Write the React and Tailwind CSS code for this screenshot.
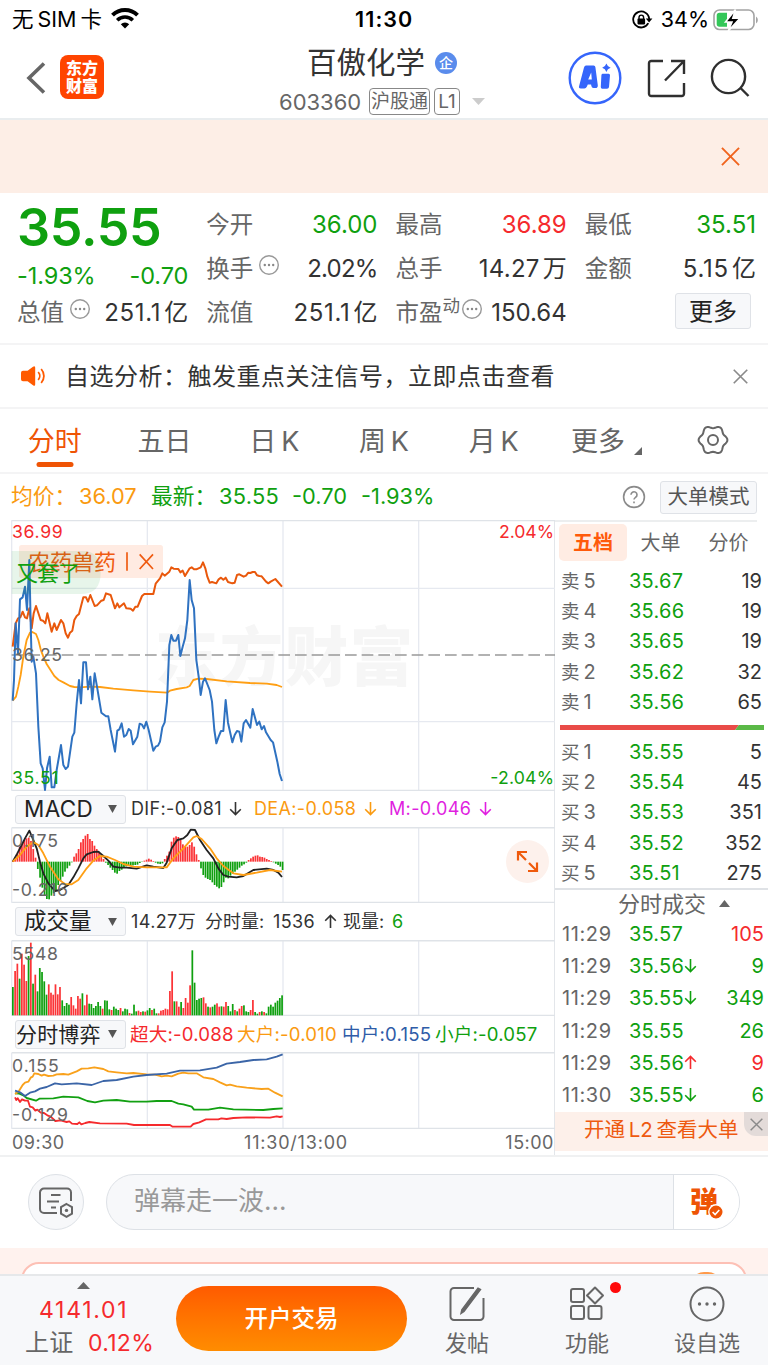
import React from 'react';
import clsx from 'clsx';

const GREEN = '#0fa00f';
const RED = '#f52a2d';

/* ---------- chart data (three units per pixel) ---------- */

const PRICE =
  '38,662 42,600 47,430 54,520 60,358 68,352 75,320 81,390 88,240 92,430 95,545 100,530 108,580 115,740 122,850 128,865 135,930 141,865 149,830 155,922 163,922 170,870 183,795 190,855 197,867 204,860 217,770 223,758 230,670 237,600 243,670 250,547 258,547 264,628 271,590 277,658 284,580 291,620 304,698 318,709 325,709 332,750 345,815 352,752 358,748 365,730 372,770 379,765 386,747 392,752 399,793 412,770 419,731 426,734 432,745 439,725 446,750 460,812 467,800 474,797 480,785 487,742 494,727 501,665 508,495 514,465 520,482 528,482 535,465 541,528 548,500 555,475 562,420 569,300 575,360 582,385 589,540 596,590 602,645 609,605 615,595 629,630 636,665 643,750 649,790 656,770 663,753 670,753 677,660 684,728 697,787 704,765 711,753 718,755 724,785 731,730 738,720 751,743 758,687 771,735 778,725 785,748 792,738 798,757 812,780 819,787 832,845 839,882 846,903';
const SECTOR =
  '38,500 47,430 54,415 61,412 68,395 75,412 81,415 88,385 95,445 101,400 108,378 122,420 129,422 136,430 142,400 155,455 163,430 170,450 183,420 190,430 197,460 204,473 210,458 217,452 223,420 230,408 237,402 250,352 258,352 264,365 271,345 284,378 291,376 304,362 311,360 318,340 332,345 345,385 352,370 358,382 372,370 379,385 392,386 399,392 406,380 413,380 426,348 433,342 453,342 460,342 467,311 480,295 487,280 494,287 508,275 514,262 521,266 535,267 541,277 548,272 555,288 569,265 575,262 582,268 589,268 602,262 609,247 616,265 622,290 629,308 636,306 649,310 656,298 663,293 670,299 677,293 684,306 697,310 704,308 711,285 718,283 731,290 738,287 745,278 751,279 758,276 765,276 771,286 778,288 785,289 798,305 805,310 812,305 826,297 846,320';
const AVERAGE =
  '38,662 48,650 55,620 62,585 70,530 80,480 90,458 97,456 108,462 115,480 122,508 130,530 140,552 150,568 163,588 176,600 190,607 210,618 223,621 240,622 270,620 300,621 340,626 400,631 450,635 501,638 510,632 530,627 560,622 569,618 580,600 595,596 620,597 680,604 750,609 800,611 830,615 846,621';

const MACD = [
  2, 12, 25, 45, 55, 65, 70, 72, 62, 38, 12, -22, -48, -78, -102, -112, -113, -102, -95, -85, -70, -58, -45, -30, -20,
  -12, -2, 15, 25, 38, 58, 68, 78, 83, 68, 62, 48, 38, 30, 18, 8, -3, -10, -18, -25, -33, -36, -28, -24, -18, -14, -12,
  -12, -11, -10, -9, -4, -1, 3, 6, 9, 6, 2, -3, -6, -7, -5, 8, 18, 30, 60, 72, 76, 74, 65, 52, 46, 45, 50, 58, 45, 22,
  5, -20, -40, -48, -52, -55, -62, -70, -75, -80, -76, -62, -48, -50, -42, -36, -30, -24, -18, -12, -8, -3, 5, 10, 15,
  18, 19, 15, 14, 12, 8, 5, 2, -2, -6, -10, -15, -25,
];
const DIF =
  '38,215 52,190 65,165 75,145 88,122 98,145 110,175 120,215 130,250 145,280 165,303 180,300 205,285 220,262 235,235 250,205 260,193 280,186 295,185 310,198 325,212 340,230 360,233 380,233 410,236 440,226 460,230 490,234 500,218 515,175 532,150 550,145 562,135 572,119 585,120 600,150 620,180 640,205 655,235 670,255 685,260 710,262 730,258 760,240 800,236 820,240 835,248 846,261';
const DEA =
  '38,215 60,195 80,170 100,156 115,165 130,190 150,230 175,268 195,282 215,283 235,270 260,235 280,212 300,198 320,200 345,210 370,222 400,230 440,232 500,232 520,205 550,175 580,142 590,138 605,147 630,175 650,205 670,228 700,250 730,255 770,248 810,240 846,245';

// positive = rising minute, negative = falling minute
const VOLUME = [
  -85, 133, 155, -110, 185, 152, 103, -178, 218, -95, 122, -72, -142, -130, -102, -62, 93, 68, 62, 93, 63, 85, -45, -28,
  -37, -32, 55, 30, 20, 58, 50, -66, 30, 62, -35, -34, -22, -28, -40, -28, 20, -45, -44, -18, 16, -26, -20, -16, 22, -12,
  -20, -18, 7, -5, -32, -12, 14, 10, -12, 11, -15, -22, 16, -20, -6, 6, 14, 16, 20, 18, 73, 132, -42, 42, 26, -40, 22,
  52, 38, 90, -195, -98, -46, -50, -52, 54, 36, -26, 24, -26, -32, 36, 26, -27, 26, 40, -28, -12, -34, 16, -12, 20, 28,
  -30, -12, -10, 16, 46, -10, -5, 10, -12, 10, -6, -26, -32, -26, -38, -44, -52, -60,
];

const FLOWS = [
  ['#f52a2d', '45,262 49,270 53,265 60,276 66,268 75,272 84,272 90,290 98,292 106,302 112,299 122,308 132,309 142,316 152,320 166,333 182,331 200,336 208,334 216,341 232,342 238,337 244,343 256,339 268,336 300,340 380,341 402,345 510,345 518,350 572,350 580,342 598,337 618,328 655,328 664,325 680,327 700,324 740,322 810,323 830,319 840,321 848,319'],
  ['#12a012', '45,250 58,251 70,256 80,264 108,272 118,266 160,265 190,260 235,262 262,273 285,277 310,272 350,270 390,275 440,275 470,273 515,273 535,281 550,283 575,290 582,299 625,299 660,293 700,298 790,300 820,297 848,295'],
  ['#f9a11b', '45,252 55,246 68,225 75,218 85,215 92,203 98,200 103,190 115,192 125,197 132,194 145,198 160,197 170,193 190,192 205,194 230,184 245,176 265,175 283,172 310,177 325,184 350,187 380,190 400,189 440,193 465,194 485,199 500,197 515,199 535,191 550,188 565,190 590,190 610,202 640,207 660,217 680,226 690,224 710,229 740,233 785,237 805,236 825,248 848,259'],
  ['#3b65a7', '45,242 60,247 75,258 90,248 105,244 120,236 140,231 165,220 185,223 230,220 275,225 310,213 350,210 400,200 440,195 500,191 540,182 600,181 650,173 680,161 720,156 760,150 800,148 830,140 848,133'],
];

const SELLS = [
  ['卖5', '35.67', '19'],
  ['卖4', '35.66', '19'],
  ['卖3', '35.65', '19'],
  ['卖2', '35.62', '32'],
  ['卖1', '35.56', '65'],
];
const BUYS = [
  ['买1', '35.55', '5'],
  ['买2', '35.54', '45'],
  ['买3', '35.53', '351'],
  ['买4', '35.52', '352'],
  ['买5', '35.51', '275'],
];
const TRADES = [
  ['11:29', '35.57', '', '105', true],
  ['11:29', '35.56', '↓', '9', false],
  ['11:29', '35.55', '↓', '349', false],
  ['11:29', '35.55', '', '26', false],
  ['11:29', '35.56', '↑', '9', true],
  ['11:30', '35.55', '↓', '6', false],
];

// six-toothed outline of the settings wheel
const GEAR = Array.from({ length: 72 }, (_, i) => {
  const a = (i * Math.PI) / 36;
  const r = 13.1 + 1.3 * Math.cos(6 * a);
  return `${(16 + r * Math.cos(a)).toFixed(2)},${(15 + r * Math.sin(a)).toFixed(2)}`;
}).join(' ');

/* ---------- small pieces ---------- */

const Cross = ({ size, color, width }) => (
  <svg width={size} height={size} viewBox="0 0 20 20" fill="none" stroke={color} strokeWidth={width}>
    <path d="M1 1 19 19M19 1 1 19" />
  </svg>
);

const Dots = () => (
  <svg width="22" height="22" viewBox="0 0 22 22" className="shrink-0">
    <circle cx="11" cy="11" r="9.3" fill="none" stroke="#999" strokeWidth="1.4" />
    <circle cx="6.8" cy="11" r="1.2" fill="#888" />
    <circle cx="11" cy="11" r="1.2" fill="#888" />
    <circle cx="15.2" cy="11" r="1.2" fill="#888" />
  </svg>
);

const Arrow = ({ up, className }) => (
  <svg
    width="13"
    height="15"
    viewBox="0 0 13 15"
    fill="none"
    stroke="currentColor"
    strokeWidth="1.6"
    className={clsx('-mt-px shrink-0', up && 'rotate-180', className)}
  >
    <path d="M6.5 1v12.5M1.2 8.3l5.3 5.3 5.3-5.3" />
  </svg>
);

const Cell = ({ label, value, unit, color = 'text-[#333]', spacing, info, sup }) => (
  <div className="flex h-11 items-center justify-between">
    <span className="flex items-center text-[23.5px] text-[#666]">
      {label}
      {sup && <span className="-mt-[14px] text-[17.5px]">{sup}</span>}
      {info && <span className={clsx('-mt-[8px]', sup ? 'ml-[1px]' : 'ml-[5px]')}><Dots /></span>}
    </span>
    <span className={clsx('text-[24px]', color)}>
      <span className={spacing}>{value}</span>
      {unit && <span className="ml-[3px]">{unit}</span>}
    </span>
  </div>
);

const Grid = ({ top, bottom, rows = [] }) => (
  <g fill="none" stroke="#e6e9f0" strokeWidth="4">
    <path d={`M442 ${top}V${bottom}M849 ${top}V${bottom}M1256 ${top}V${bottom}`} />
    {rows.map((y) => (
      <path key={y} d={`M35 ${y}H1665`} />
    ))}
    <path d={`M35 ${top}H1665M35 ${bottom}H1665`} stroke="#dfe3e8" strokeWidth="5" />
    <path d={`M35 ${top}V${bottom}`} />
  </g>
);

const Label = ({ x, y, fill = '#666', anchor = 'start', length, children }) => (
  <text x={x} y={y} fill={fill} textAnchor={anchor} textLength={length} fontSize="53">
    {children}
  </text>
);

const Picker = ({ children, tight }) => (
  <div
    className={clsx(
      'ml-[15px] flex h-[29px] w-[111px] shrink-0 items-center justify-between rounded-[3px] border border-[#dfe2e7] bg-[#f7f8fa] pr-[8px] text-[#222]',
      tight ? 'pl-0 text-[21px]' : 'pl-[8px] text-[22.5px]',
    )}
  >
    <span className="whitespace-nowrap">{children}</span>
    <svg width="9" height="8" viewBox="0 0 10 9" fill="#555">
      <path d="M0 0h10L5 9z" />
    </svg>
  </div>
);

/* ---------- sections ---------- */

const StatusBar = () => (
  <div className="flex h-10 items-center text-black">
    <div className="flex w-[355px] items-center pl-[12px]">
      <span className="text-[21.5px]">无</span>
      <span className="ml-[4px] text-[21.5px]">SIM</span>
      <span className="ml-[4px] text-[21.5px]">卡</span>
      <svg width="28" height="21" viewBox="0 0 28 21" fill="none" stroke="#000" className="ml-[9px] -mt-[3px]">
        <path d="M1.5 7.2a17.8 17.8 0 0 1 25 0" strokeWidth="4" />
        <path d="M6.2 12.2a11.2 11.2 0 0 1 15.6 0" strokeWidth="3.6" />
        <path d="M14 20.5 9.8 16.2a6 6 0 0 1 8.4 0z" fill="#000" stroke="none" />
      </svg>
    </div>
    <span className="text-[21.5px] font-semibold tracking-[1.1px]">11:30</span>
    <div className="ml-auto flex items-center pr-[9px]">
      <svg width="22" height="20" viewBox="0 0 22 20" fill="none" stroke="#000" strokeWidth="1.8">
        <path d="M17.3 13.2A8 8 0 1 1 18.2 9" />
        <path d="M14.8 8.6h6.6l-3.3 4z" fill="#000" stroke="none" />
        <rect x="6.5" y="8.6" width="7.6" height="5.8" rx="0.8" fill="#000" stroke="none" />
        <path d="M8 9V7.4a2.3 2.3 0 0 1 4.6 0V9" strokeWidth="1.4" />
      </svg>
      <span className="ml-[8px] text-[21.5px]">34%</span>
      <svg width="46" height="24" viewBox="0 0 46 24" className="ml-[4px]">
        <rect x="1" y="2" width="40" height="19.5" rx="5.5" fill="none" stroke="#a3a3a3" strokeWidth="1.6" />
        <path d="M43 8.5a4.2 4.2 0 0 1 0 7z" fill="#a3a3a3" />
        <path d="M6.5 4.7H14V18.8H6.5a2.8 2.8 0 0 1-2.8-2.8V7.5a2.8 2.8 0 0 1 2.8-2.8z" fill="#34c759" />
        <path d="M22.5 1.5 12.5 14H19l-3.8 9L27 10.2h-7.2z" fill="#000" stroke="#fff" strokeWidth="1.6" />
      </svg>
    </div>
  </div>
);

const Header = () => (
  <header className="flex h-[80px] border-b-2 border-[#e9edef]">
    <div className="flex w-[279px] shrink-0 items-start pl-[26px]">
      <svg width="20" height="32" viewBox="0 0 20 32" fill="none" stroke="#666" strokeWidth="3.6" className="mt-[22px]">
        <path d="M18 1.5 3 16l15 14.5" />
      </svg>
      <div className="ml-[14px] mt-[15px] flex h-[44px] w-[44px] flex-col items-center justify-center rounded-[8px] bg-[#ff4400] text-[16px] font-black leading-[18px] text-white">
        <span>东方</span>
        <span>财富</span>
      </div>
    </div>
    <div className="flex flex-col">
      <div className="mt-[1px] flex h-[44px] items-center pl-[28px]">
        <span className="text-[29.5px] text-[#333]">百傲化学</span>
        <span className="ml-[10px] flex h-[22px] w-[22px] items-center justify-center rounded-full bg-[#5a8cec] text-[14px] font-medium text-white">
          企
        </span>
      </div>
      <div className="flex h-[33px] items-center text-[#666]">
        <span className="w-[83px] text-[22px]">603360</span>
        <span className="ml-[7px] flex h-[27px] w-[61px] items-center justify-center rounded-[4px] border border-[#888] text-[19px]">
          沪股通
        </span>
        <span className="ml-[4px] flex h-[27px] w-[26px] items-center justify-center rounded-[4px] border border-[#888] text-[19px]">
          L1
        </span>
        <svg width="13" height="7" viewBox="0 0 13 7" fill="#ccc" className="ml-[12px]">
          <path d="M0 0h13L6.5 7z" />
        </svg>
      </div>
    </div>
    <div className="ml-auto flex h-[76px] items-center pr-[18px]">
      <svg width="54" height="54" viewBox="0 0 54 54">
        <circle cx="27" cy="27" r="25.3" fill="none" stroke="#3565fb" strokeWidth="2.4" />
        <g fill="#3565fb">
          <path
            fillRule="evenodd"
            d="M18 14.6h7.6q1.6 0 1.8 1.6l2.4 18q.2 2.8-2.4 2.8h-1.8q-2 0-2.3-2.2l-.2-1.2h-3.3l-1 2.2q-.8 1.6-2.4 1.6h-3.6q-2.6 0-1.6-2.6L16 16.6q.6-2 2-2zM20.2 28.6h3.6l-.6-7z"
          />
          <path d="M34.4 22.8h6.2q1.5 0 1.4 1.5l-1 11.6q-.2 1.8-2 1.8h-4.6q-1.8 0-1.6-1.8l.6-11.6q.1-1.5 1-1.5z" />
          <path d="M38.4 12.6q1 3.2 4.2 4.2-3.2 1-4.2 4.2-1-3.2-4.2-4.2 3.2-1 4.2-4.2z" />
        </g>
      </svg>
      <svg width="39" height="39" viewBox="0 0 39 39" fill="none" stroke="#2f2f2f" strokeWidth="2.4" className="ml-[25px]">
        <path d="M16 2H4.2A2.2 2.2 0 0 0 2 4.2v30.6A2.2 2.2 0 0 0 4.2 37h30.6a2.2 2.2 0 0 0 2.2-2.2V24" />
        <path d="M24 2h13v13M37 2 18 21.5" />
      </svg>
      <svg width="40" height="40" viewBox="0 0 40 40" fill="none" stroke="#2f2f2f" strokeWidth="2.4" className="ml-[24px]">
        <circle cx="18.5" cy="18.5" r="16.6" />
        <path d="m30.5 30 8 8" />
      </svg>
    </div>
  </header>
);

const Quote = () => (
  <section className="grid h-[152px] grid-cols-4 gap-x-[18px] border-b-2 border-[#f4f4f5] pl-[17px] pr-[12px] pt-[10px]">
    <div>
      <div className="-mt-px flex h-[52px] items-center text-[52px] font-semibold leading-none tracking-[-0.3px] text-[#0fa00f]">
        35.55
      </div>
      <div className="flex h-[37px] items-center justify-between pt-[6px] text-[23.5px] tracking-[-0.1px] text-[#0fa00f]">
        <span>-1.93%</span>
        <span>-0.70</span>
      </div>
      <Cell label="总值" value="251.1" unit="亿" spacing="tracking-[0.7px]" info />
    </div>
    <div>
      <Cell label="今开" value="36.00" color="text-[#0fa00f]" />
      <Cell label="换手" value="2.02%" spacing="tracking-[-0.8px]" info />
      <Cell label="流值" value="251.1" unit="亿" spacing="tracking-[0.7px]" />
    </div>
    <div>
      <Cell label="最高" value="36.89" color="text-[#f52a2d]" />
      <Cell label="总手" value="14.27" unit="万" spacing="tracking-[0.3px]" />
      <Cell label="市盈" sup="动" value="150.64" info />
    </div>
    <div>
      <Cell label="最低" value="35.51" color="text-[#0fa00f]" />
      <Cell label="金额" value="5.15" unit="亿" spacing="tracking-[0.8px]" />
      <button className="ml-auto mr-[5px] mt-[2px] flex h-[36px] w-[76px] items-center justify-center rounded-[3px] border border-[#dfe2e7] bg-[#f7f8fa] pt-[2px] text-[24px] text-[#222]">
        更多
      </button>
    </div>
  </section>
);

const Notice = () => (
  <section className="flex h-[64px] items-center border-b-2 border-[#f4f4f5] pl-[21px] pr-[20px]">
    <svg width="25" height="20" viewBox="0 0 25 20" fill="#ff5a00">
      <path d="M2 4.7h4.6L12 .8q2.2-1.4 2.2 1v16.4q0 2.4-2.2 1l-5.4-3.9H2q-2 0-2-2V6.7q0-2 2-2z" />
      <g fill="none" stroke="#ff5a00" strokeWidth="1.8">
        <path d="M17.2 6a6 6 0 0 1 0 8M20.2 3a10.4 10.4 0 0 1 0 14" />
      </g>
    </svg>
    <span className="ml-[19px] mt-px whitespace-nowrap text-[24px] tracking-[0.5px] text-[#333]">
      自选分析：触发重点关注信号，立即点击查看
    </span>
    <span className="ml-auto"><Cross size={15} color="#8a8a8a" width={2.2} /></span>
  </section>
);

const Tabs = () => (
  <nav className="grid h-[65px] grid-cols-7 items-center border-b-2 border-[#f4f4f5] pt-[2px] text-center text-[27px] text-[#666]">
    <div className="relative text-[#ef5405]">
      分时
      <span className="absolute bottom-[-12px] left-1/2 h-[5px] w-[37px] -translate-x-1/2 rounded-full bg-[#ef5405]" />
    </div>
    <span>五日</span>
    <span>日&thinsp;K</span>
    <span>周&thinsp;K</span>
    <span>月&thinsp;K</span>
    <span className="flex items-end justify-center pl-[6px]">
      更多
      <svg width="8" height="8" viewBox="0 0 8 8" fill="#666" className="mb-0 ml-[9px]">
        <path d="M8 0v8H0z" />
      </svg>
    </span>
    <svg width="32" height="30" viewBox="0 0 32 30" fill="none" stroke="#666" strokeWidth="2" className="mx-auto -mt-[3px]">
      <polygon points={GEAR} strokeLinejoin="round" />
      <circle cx="16" cy="15" r="5" />
    </svg>
  </nav>
);

const Summary = () => (
  <div className="flex h-[46px] items-center whitespace-nowrap pl-[11px] pr-[11px] text-[21.8px] text-[#0fa00f]">
    <span className="w-[68px] text-[#fa9a10]">均价：</span>
    <span className="w-[72px] text-[#fa9a10]">36.07</span>
    <span className="w-[68px]">最新：</span>
    <span className="w-[73px] tracking-[0.3px]">35.55</span>
    <span className="w-[69px]">-0.70</span>
    <span>-1.93%</span>
    <svg width="24" height="24" viewBox="0 0 24 24" fill="none" stroke="#8a8a8a" strokeWidth="1.6" className="ml-auto">
      <circle cx="12" cy="12" r="10.4" />
      <path d="M9 9.8a3 3 0 1 1 4.6 2.5c-1 .7-1.6 1.1-1.6 2.3M12 16.4v1.8" />
    </svg>
    <button className="ml-[14px] flex h-[33px] w-[97px] items-center justify-center rounded-[3px] border border-[#dfe2e7] bg-[#f7f8fa] text-[20.5px] text-[#555]">
      大单模式
    </button>
  </div>
);

const PriceChart = () => (
  <div className="h-[271px]">
    <svg width="544" height="271" viewBox="33 120 1632 813" className="ml-[11px]">
      <text x="464" y="600" fontSize="190" fontWeight="900" fill="#f6f6f6" textLength="775">
        东方财富
      </text>
      <Grid top={121} bottom={932} rows={[325, 725]} />
      <path d="M35 525H1665" stroke="#999" strokeWidth="4" strokeDasharray="35 15" />
      <rect x="57" y="195" width="432" height="99" rx="8" fill="#ffebe2" />
      <g fill="none" strokeWidth="5.500" strokeLinejoin="round">
        <polyline points={AVERAGE} stroke="#ff9f14" />
        <polyline points={SECTOR} stroke="#e9580c" strokeWidth="6" />
        <polyline points={PRICE} stroke="#2f72c1" strokeWidth="6" />
      </g>
      <text x="84" y="270" fontSize="66" fill="#ef5a10" textLength="264">
        农药兽药
      </text>
      <path d="M381 217V272M419 223 459 267M459 223 419 267" stroke="#ef5a10" strokeWidth="5" />
      <path d="M35 213H248Q302 213 302 278T240 342H35Z" fill="#21a53c" fillOpacity="0.11" />
      <text x="48" y="302" fontSize="66" fill={GREEN} textLength="192">
        又套了
      </text>
      <Label x="36" y="175" fill={RED} length={152}>36.99</Label>
      <Label x="36" y="543" length={150}>36.25</Label>
      <Label x="36" y="911" fill={GREEN} length={140}>35.51</Label>
      <Label x="1497" y="175" fill={RED} length={165}>2.04%</Label>
      <Label x="1471" y="911" fill={GREEN} length={191}>-2.04%</Label>
    </svg>
  </div>
);

const MacdChart = () => (
  <div className="relative h-[76px]">
    <svg width="544" height="76" viewBox="33 111 1632 228" className="ml-[11px]">
      <Grid top={113} bottom={338} />
      {MACD.map((v, i) => (
        <rect
          key={i}
          x={36 + i * 6.8}
          y={v > 0 ? 215 - v : 215}
          width="5.2"
          height={Math.abs(v)}
          fill={v > 0 ? '#fb3437' : GREEN}
        />
      ))}
      <g fill="none" strokeWidth="5.500" strokeLinejoin="round">
        <polyline points={DIF} stroke="#222" />
        <polyline points={DEA} stroke="#ff9f14" />
      </g>
      <Label x="36" y="171" length={138}>0.175</Label>
      <Label x="36" y="317" length={168}>-0.216</Label>
    </svg>
    <div className="absolute left-[506px] top-[13px] flex h-[43px] w-[43px] items-center justify-center rounded-full bg-[#fdf1ec]">
      <svg width="23" height="23" viewBox="0 0 23 23" fill="none" stroke="#ef5a0c" strokeWidth="2.2">
        <path d="M2 10.5V2h9M2 2l8 8M21 12.5V21h-9M21 21l-8-8" />
      </svg>
    </div>
  </div>
);

const VolumeChart = () => (
  <svg width="544" height="76" viewBox="33 449 1632 228" className="ml-[11px] block">
    <Grid top={451} bottom={676} />
    {VOLUME.map((v, i) => (
      <rect
        key={i}
        x={36 + i * 6.73}
        y={675 - Math.abs(v)}
        width="5.2"
        height={Math.abs(v)}
        fill={v > 0 ? '#fb3437' : GREEN}
      />
    ))}
    <Label x="36" y="508" length={138}>5548</Label>
  </svg>
);

const FlowChart = () => (
  <svg width="544" height="77" viewBox="33 126 1632 231" className="ml-[11px] block">
    <Grid top={128} bottom={356} />
    <g fill="none" strokeWidth="5.500" strokeLinejoin="round">
      {FLOWS.map(([color, points]) => (
        <polyline key={color} points={points} stroke={color} />
      ))}
    </g>
    <Label x="36" y="187" length={140}>0.155</Label>
    <Label x="36" y="333" length={168}>-0.129</Label>
  </svg>
);

const Charts = () => (
  <div className="w-[555px] shrink-0 border-r border-[#e3e6ea]">
    <PriceChart />
    <div className="flex h-[36px] items-center whitespace-nowrap text-[18px] tracking-[0.35px] text-[#333]">
      <Picker>MACD</Picker>
      <span className="ml-[5px] w-[98px]">DIF:-0.081</span>
      <Arrow />
      <span className="ml-[12px] w-[110px] text-[#fa9a10]">DEA:-0.058</span>
      <Arrow className="text-[#fa9a10]" />
      <span className="ml-[12px] w-[90px] text-[#e01fe0]">M:-0.046</span>
      <Arrow className="text-[#e01fe0]" />
    </div>
    <MacdChart />
    <div className="flex h-[37px] items-center whitespace-nowrap text-[18px] text-[#333]">
      <Picker>成交量</Picker>
      <span className="ml-[5px] w-[74px] tracking-[0.4px]">14.27万</span>
      <span className="w-[68px]">分时量:</span>
      <span className="w-[51px] tracking-[0.4px]">1536</span>
      <Arrow up />
      <span className="ml-[6px] w-[49px]">现量:</span>
      <span className="text-[#0fa00f]">6</span>
    </div>
    <VolumeChart />
    <div className="flex h-[36px] items-center whitespace-nowrap text-[18.6px] tracking-[0.18px]">
      <Picker tight>分时博弈</Picker>
      <span className="ml-[4px] w-[107px] text-[#f52a2d]">超大:-0.088</span>
      <span className="w-[105px] text-[#fa9a10]">大户:-0.010</span>
      <span className="w-[93px] text-[#2f5ca8]">中户:0.155</span>
      <span className="text-[#0fa00f]">小户:-0.057</span>
    </div>
    <FlowChart />
    <div className="flex h-[27px] items-center justify-between pl-[12px] text-[18px] tracking-[0.5px] text-[#666]">
      <span>09:30</span>
      <span className="ml-[22px] tracking-[0.8px]">11:30/13:00</span>
      <span>15:00</span>
    </div>
  </div>
);

const Level = ({ row }) => (
  <div className="flex h-[30.2px] items-center pl-[6px] pr-[6px] text-[20px]">
    <span className="w-[68px] text-[#666]">
      <span className="mr-[4px] text-[18.5px]">{row[0][0]}</span>
      {row[0][1]}
    </span>
    <span className="tracking-[0.25px] text-[#0fa00f]">{row[1]}</span>
    <span className="ml-auto text-[#333]">{row[2]}</span>
  </div>
);

const OrderBook = () => (
  <aside className="flex-1 pb-px">
    <div className="mr-[11px] border-t-2 border-[#eceeef]" />
    <div className="flex h-[41px] items-center pl-[4px] text-[20px] text-[#666]">
      <span className="flex h-[37px] w-[68px] items-center justify-center rounded-[5px] bg-[#ffece3] font-bold text-[#ff5a0a]">
        五档
      </span>
      <span className="w-[67px] text-center">大单</span>
      <span className="w-[69px] text-center">分价</span>
    </div>
    <div className="mt-[3px]">
      {SELLS.map((row) => (
        <Level key={row[0]} row={row} />
      ))}
    </div>
    <svg width="204" height="5" viewBox="0 0 204 5" className="ml-[5px] mt-[8px] block">
      <path d="M0 0h179l-4 5H0z" fill="#e94b48" />
      <path d="M179 0h25v5h-29z" fill="#5ab947" />
    </svg>
    <div className="mt-[7px]">
      {BUYS.map((row) => (
        <Level key={row[0]} row={row} />
      ))}
    </div>
    <div className="flex h-[30px] items-center border-t-2 border-[#dfe2e6] pl-[63px] text-[22px] text-[#666]">
      分时成交
      <svg width="11" height="7" viewBox="0 0 11 7" fill="#666" className="ml-[13px]">
        <path d="M0 7h11L5.5 0z" />
      </svg>
    </div>
    {TRADES.map(([time, price, arrow, size, rising], i) => (
      <div key={i} className="flex h-[32.2px] items-center pl-[7px] pr-[4px] text-[20px] text-[#0fa00f]">
        <span className="w-[67px] tracking-[0.6px] text-[#666]">{time}</span>
        <span className="tracking-[0.2px]">{price}</span>
        {arrow && <Arrow up={arrow === '↑'} className={clsx(arrow === '↑' && 'text-[#f52a2d]')} />}
        <span className={clsx('ml-auto', rising && 'text-[#f52a2d]')}>{size}</span>
      </div>
    ))}
    <div className="relative mt-[1px] flex h-[39px] items-center bg-[#fdf0ea] pb-[2px] pl-[29px] text-[20.5px] text-[#ee5a10]">
      开通&thinsp;L2&thinsp;查看大单
      <span className="absolute right-0 top-0 flex h-[24px] w-[24px] items-center justify-center rounded-bl-[12px] bg-[#e3dbd9]">
        <Cross size={13} color="#8a8a8a" width={2.2} />
      </span>
    </div>
  </aside>
);

const CommentBar = () => (
  <section className="flex h-[93px] items-start border-t-2 border-[#f0f1f2] pl-[28px] pt-[17px]">
    <span className="flex h-[56px] w-[56px] items-center justify-center rounded-full border border-[#dde1e6] bg-[#f7f8fa]">
      <svg width="36" height="32" viewBox="0 0 36 32" fill="none" stroke="#666" strokeWidth="2">
        <path d="M19 27H6a4 4 0 0 1-4-4V6.500a4 4 0 0 1 4-4h23a4 4 0 0 1 4 4V15" />
        <path d="M13 9h9.500M9 15.500h12M13 21.500h5" />
        <path d="m28.500 18 5.500 3.200v6.400l-5.500 3.200-5.500-3.200v-6.400z" />
        <circle cx="28.500" cy="24.400" r="1.700" fill="#666" stroke="none" />
      </svg>
    </span>
    <div className="ml-[22px] flex h-[56px] w-[634px] overflow-hidden rounded-full border border-[#dde1e6] bg-[#f7f8fa]">
      <span className="flex-1 pl-[27px] pt-[7px] text-[26px] leading-[38px] text-[#999]">弹幕走一波...</span>
      <span className="relative flex w-[66px] items-center border-l border-[#dde1e6] bg-white pl-[16px] text-[28px] font-black text-[#ee5405]">
        弹
        <svg width="16" height="16" viewBox="0 0 16 16" className="absolute left-[34px] top-[29px]">
          <circle cx="8" cy="8" r="7.200" fill="#ee5405" stroke="#fff" strokeWidth="1.400" />
          <path d="m4.600 8 2.500 2.600 4.200-4.600" fill="none" stroke="#fff" strokeWidth="1.600" />
        </svg>
      </span>
    </div>
  </section>
);

const Promo = () => (
  <section className="h-[26px] overflow-hidden bg-[#fff2ee] pl-[21px] pr-[21px] pt-[14px]">
    <div className="h-[40px] rounded-[18px] border-2 border-[#fdc0b5] bg-white pl-[668px] pt-[8px]">
      <div className="h-[26px] w-[30px] rounded-full bg-[#ff9a4a]" />
    </div>
  </section>
);

const NavItem = ({ label, children, className }) => (
  <div className={clsx('flex flex-col items-center text-[22px] leading-[30px] text-[#666]', className)}>
    <svg width="40" height="40" viewBox="0 0 40 40" fill="none" stroke="#666" strokeWidth="2">
      {children}
    </svg>
    <span className="mt-[4px]">{label}</span>
  </div>
);

const BottomBar = () => (
  <footer className="flex h-[91px] border-t-2 border-[#e6e8ea] bg-[#f7f8fa]">
    <div className="flex w-[176px] flex-col pl-[25px] text-[23px] leading-[32px] text-[#f52a2d]">
      <svg width="13" height="7" viewBox="0 0 13 7" fill="#666" className="ml-[52px] mt-[6px]">
        <path d="M0 7h13L6.500 0z" />
      </svg>
      <span className="ml-[14px] mt-[5px] h-[32px] tracking-[1.7px]">4141.01</span>
      <span className="flex h-[33px] items-center tracking-[0.3px]">
        <span className="w-[63px] text-[24px] text-[#666]">上证</span>0.12%
      </span>
    </div>
    <button className="mt-[10px] h-[65px] w-[231px] rounded-full bg-gradient-to-b from-[#ff5a00] to-[#ff8c00] text-[23.5px] font-medium text-white">
      开户交易
    </button>
    <NavItem label="发帖" className="ml-[27px] mt-[8px] w-[66px]">
      <path d="M27 4H7a3.500 3.500 0 0 0-3.500 3.500v25A3.500 3.500 0 0 0 7 36h26a3.500 3.500 0 0 0 3.500-3.500V14" />
      <path d="M33.500 5.500 17 27.500l-3 2 .8-3.600L31 4.200z" fill="#666" strokeWidth="1.400" />
    </NavItem>
    <NavItem label="功能" className="ml-[54px] mt-[8px] w-[66px]">
      <rect x="4" y="5" width="13" height="13" rx="2" />
      <rect x="4" y="22" width="13" height="13" rx="2" />
      <rect x="21.500" y="22" width="13" height="13" rx="2" />
      <path strokeLinejoin="round" d="m28 3.500 8 8-8 8-8-8z" />
    </NavItem>
    <span className="-ml-[10px] mt-[6px] h-[11px] w-[11px] rounded-full bg-[#ff0a0a]" />
    <NavItem label="设自选" className="ml-[48px] mt-[8px] w-[76px]">
      <circle cx="20" cy="20" r="16.500" />
      <g fill="#666" stroke="none">
        <circle cx="12.500" cy="20" r="1.700" />
        <circle cx="20" cy="20" r="1.700" />
        <circle cx="27.500" cy="20" r="1.700" />
      </g>
    </NavItem>
  </footer>
);

const App = () => {
  return (
    <div className="h-[1366px] w-[768px] overflow-hidden bg-white font-['Inter','Noto_Sans_CJK_SC',sans-serif] leading-none">
      <StatusBar />
      <Header />
      <div className="flex h-[73px] items-center justify-end bg-[#fdeee6] pr-[28px]">
        <Cross size={19} color="#f0641e" width={2} />
      </div>
      <Quote />
      <Notice />
      <Tabs />
      <Summary />
      <main className="flex h-[635px]">
        <Charts />
        <OrderBook />
      </main>
      <CommentBar />
      <Promo />
      <BottomBar />
    </div>
  );
};

export default App;
